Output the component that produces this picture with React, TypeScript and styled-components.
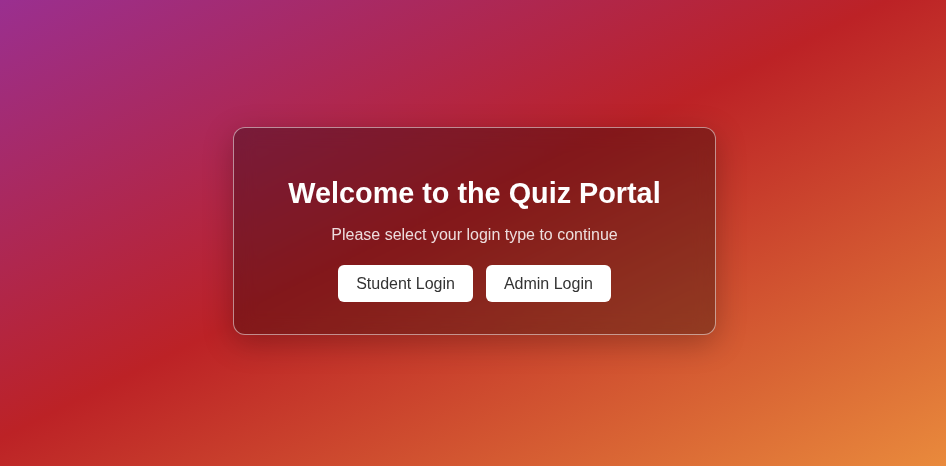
import styled, {createGlobalStyle} from 'styled-components'

const GlobalStyle = createGlobalStyle`
  * { box-sizing: border-box; }
  html, body, #root { margin: 0; padding: 0; height: 100%; }
  body {
    font-family: "Liberation Sans", Arial, sans-serif;
  }
`

function App() {
  return (
    <>
      <GlobalStyle />
      <Page>
        <Card>
          <Title>Welcome to the Quiz Portal</Title>
          <Subtitle>Please select your login type to continue</Subtitle>
          <ButtonRow>
            <LoginButton>Student Login</LoginButton>
            <LoginButton>Admin Login</LoginButton>
          </ButtonRow>
        </Card>
      </Page>
    </>
  )
}

const Page = styled.div`
  min-height: 100vh;
  display: flex;
  align-items: center;
  justify-content: center;
  background: linear-gradient(to bottom right, #9a2f90 0%, #bc2226 47%, #e98a3c 100%);
`

const Card = styled.div`
  width: 483px;
  margin-top: -5px;
  margin-left: 3px;
  padding: 49px 20px 32px;
  border: 1px solid rgba(255, 255, 255, 0.5);
  border-radius: 12px;
  background: rgba(0, 0, 0, 0.3);
  backdrop-filter: blur(10px);
  box-shadow: 0 8px 30px rgba(0, 0, 0, 0.25);
  text-align: center;
  color: #fff;
`

const Title = styled.h1`
  margin: 0 0 16px;
  font-size: 28.8px;
  line-height: 33px;
  font-weight: bold;
`

const Subtitle = styled.p`
  margin: 0 0 21px;
  font-size: 16px;
  line-height: 18px;
  color: rgba(255, 255, 255, 0.85);
`

const ButtonRow = styled.div`
  display: flex;
  justify-content: center;
  gap: 13px;
`

const LoginButton = styled.button`
  border: none;
  background: #fff;
  color: #333;
  font-family: "Liberation Sans", Arial, sans-serif;
  font-size: 16px;
  line-height: 17px;
  padding: 10px 18px;
  border-radius: 6px;
  cursor: pointer;
`

export default App
